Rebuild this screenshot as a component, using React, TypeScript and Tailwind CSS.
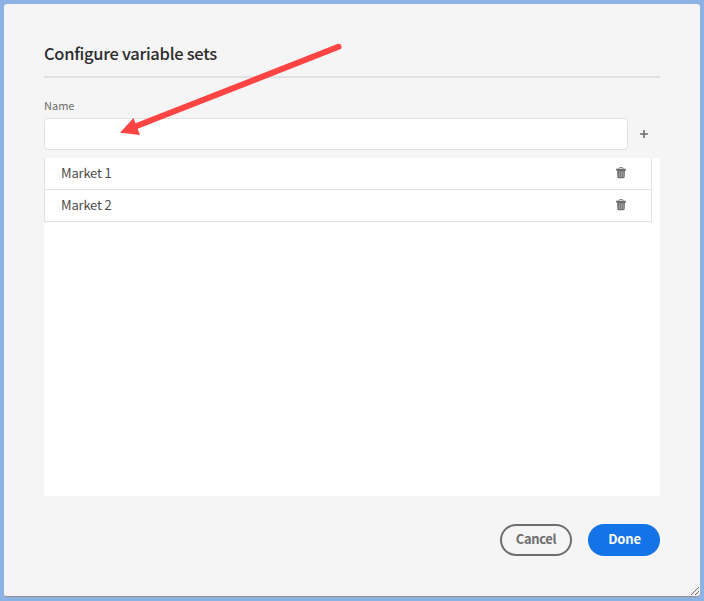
const sans = "font-['Noto_Sans_CJK_SC','Open_Sans',sans-serif]";

function TrashIcon() {
  return (
    <svg width="12" height="12" viewBox="0 0 12 12" className="block">
      <path d="M4 2V1.2Q4 .5 4.7 .5H7.3Q8 .5 8 1.2V2" fill="none" stroke="#8a8a8a" />
      <rect x="1" y="1.7" width="10" height="1.7" rx=".3" fill="#6e6e6e" />
      <path d="M2 3H10L9.6 10.6Q9.5 11.2 8.9 11.2H3.1Q2.5 11.2 2.4 10.6Z" fill="#6e6e6e" />
      <path d="M4.4 4.4V10M6.4 4.4V10M8.2 4.4V10" stroke="#c4c4c4" strokeWidth=".7" />
    </svg>
  );
}

function VariableRow({ name }: { name: string }) {
  return (
    <li className="flex h-8 items-center justify-between border-r border-b border-l border-[#e1e1e1] pr-6 pb-0.5 pl-4">
      <span className="text-[13px] leading-5 tracking-[-0.18px] text-[#4b4b4b]">{name}</span>
      <button className="h-3 w-3" aria-label="Delete">
        <TrashIcon />
      </button>
    </li>
  );
}

export default function App() {
  return (
    <div className={`relative h-[601px] w-[704px] bg-[#8cb1e3] p-1 ${sans}`}>
      <main className="flex h-[593px] w-[696px] flex-col rounded-[3px] border-b border-[#929292] bg-[#f5f5f5] px-10 pt-9">
        <h1 className="h-[38px] border-b-2 border-[#e1e1e1] text-[16.5px] leading-[26px] font-medium tracking-[-0.3px] whitespace-nowrap text-[#2c2c2c]">
          Configure variable sets
        </h1>
        <label className="mt-[19px] h-[21px] text-[11px] leading-4 text-[#6e6e6e]">Name</label>
        <div className="flex items-center">
          <input className="h-8 w-[584px] rounded border border-[#e1e1e1] bg-white outline-none" />
          <button className="flex h-8 w-8 items-center justify-center" aria-label="Add">
            <svg width="8" height="8" viewBox="0 0 8 8">
              <path d="M4 0V8M0 4H8" stroke="#6e6e6e" strokeWidth="1.6" />
            </svg>
          </button>
        </div>
        <ul className="mt-2 h-[338px] bg-white pr-2">
          <VariableRow name="Market 1" />
          <VariableRow name="Market 2" />
        </ul>
        <footer className="mt-7 flex justify-end gap-4 text-[13px] leading-5 font-bold">
          <button className="h-8 w-[72px] rounded-full border-2 border-[#6e6e6e] pb-0.5 tracking-[-0.4px] text-[#6e6e6e]">
            Cancel
          </button>
          <button className="h-8 w-[72px] rounded-full bg-[#1473e6] pb-0.5 pl-px tracking-[-0.2px] text-white">Done</button>
        </footer>
      </main>
      <svg className="absolute top-[586px] left-[690px]" width="10" height="10" viewBox="0 0 10 10">
        <path d="M1 9L9 1M5 9L9 5" stroke="#555" strokeWidth=".9" />
      </svg>
      <svg className="pointer-events-none absolute top-0 left-0" width="704" height="601" viewBox="0 0 704 601">
        <path d="M338.5 46.8L134 127" stroke="#ff4444" strokeWidth="6" strokeLinecap="round" />
        <path d="M120 132.8L133.5 118L140 135Z" fill="#ff4444" />
      </svg>
    </div>
  );
}
